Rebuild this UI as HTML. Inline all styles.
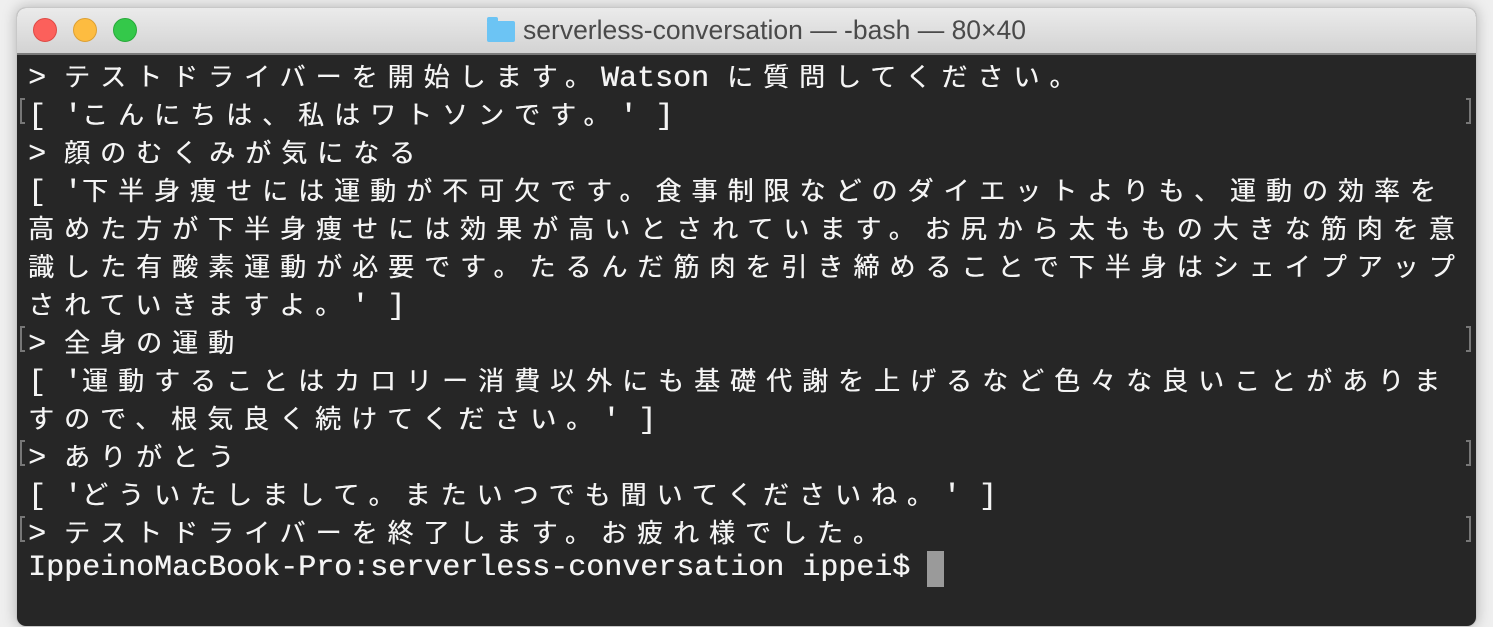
<!DOCTYPE html>
<html><head><meta charset="utf-8"><style>
body{margin:0;width:1493px;height:603px;background:#efefef;overflow:hidden;position:relative}
.win{position:absolute;left:16px;top:7px;width:1461px;height:620px;border-radius:10px;overflow:hidden;box-shadow:0 0 14px rgba(0,0,0,.25);border:1px solid #c8c8c8;box-sizing:border-box;background:#262626}
.tb{position:absolute;left:0;top:0;right:0;height:45px;background:linear-gradient(#ebebeb,#d3d3d3);border-bottom:2px solid #7a7a7a}
.dot{position:absolute;top:10px;width:24px;height:24px;border-radius:50%;box-sizing:border-box}
.title{position:absolute;left:0;right:0;top:7px;text-align:center;font:26.5px "Liberation Sans",sans-serif;color:#4a4a4a;padding-left:20px}
.fold{display:inline-block;width:28px;height:21px;background:#6cc4f4;border-radius:2px;vertical-align:-3px;margin-right:8px;position:relative}
.fold:before{content:"";position:absolute;left:0;top:-4px;width:11px;height:5px;background:#6cc4f4;border-radius:2px 2px 0 0}
.l{position:absolute;left:28px;height:38px;line-height:38px;font:30px "Liberation Mono",monospace;color:#f4f4f4;white-space:pre;text-shadow:0.4px 0 0 #f4f4f4}
.j{font-family:"Noto Sans CJK JP",sans-serif;font-size:26px;letter-spacing:10px}
.m{position:absolute;width:5px;height:26px;border:2px solid #777;box-sizing:border-box}
.ml{left:20px;border-right:none}.mr{left:1466px;border-left:none}
.cur{position:absolute;left:927px;top:551px;width:17px;height:36px;background:#9a9a9a}
</style></head><body>
<div class="win"><div class="tb">
<div class="dot" style="left:16px;background:#fc605b;border:1px solid #de4a45"></div>
<div class="dot" style="left:56px;background:#fdbc40;border:1px solid #dda033"></div>
<div class="dot" style="left:96px;background:#34c84a;border:1px solid #28a93a"></div>
<div class="title"><span class="fold"></span>serverless-conversation — -bash — 80×40</div>
</div></div>
<div class="l" style="top:57px">&gt; <span class="j">テストドライバーを開始します。</span>Watson <span class="j">に質問してください。</span></div>
<div class="l" style="top:95px">[ '<span class="j">こんにちは、私はワトソンです。</span>' ]</div>
<div class="l" style="top:133px">&gt; <span class="j">顔のむくみが気になる</span></div>
<div class="l" style="top:171px">[ '<span class="j">下半身痩せには運動が不可欠です。食事制限などのダイエットよりも、運動の効率を</span></div>
<div class="l" style="top:209px"><span class="j">高めた方が下半身痩せには効果が高いとされています。お尻から太ももの大きな筋肉を意</span></div>
<div class="l" style="top:247px"><span class="j">識した有酸素運動が必要です。たるんだ筋肉を引き締めることで下半身はシェイプアップ</span></div>
<div class="l" style="top:285px"><span class="j">されていきますよ。</span>' ]</div>
<div class="l" style="top:323px">&gt; <span class="j">全身の運動</span></div>
<div class="l" style="top:361px">[ '<span class="j">運動することはカロリー消費以外にも基礎代謝を上げるなど色々な良いことがありま</span></div>
<div class="l" style="top:399px"><span class="j">すので、根気良く続けてください。</span>' ]</div>
<div class="l" style="top:437px">&gt; <span class="j">ありがとう</span></div>
<div class="l" style="top:475px">[ '<span class="j">どういたしまして。またいつでも聞いてくださいね。</span>' ]</div>
<div class="l" style="top:513px">&gt; <span class="j">テストドライバーを終了します。お疲れ様でした。</span></div>
<div class="l" style="top:551px">IppeinoMacBook-Pro:serverless-conversation ippei$</div>
<div class="cur"></div>
<div class="m ml" style="top:98px"></div><div class="m mr" style="top:98px"></div>
<div class="m ml" style="top:326px"></div><div class="m mr" style="top:326px"></div>
<div class="m ml" style="top:440px"></div><div class="m mr" style="top:440px"></div>
<div class="m ml" style="top:516px"></div><div class="m mr" style="top:516px"></div>
</body></html>
